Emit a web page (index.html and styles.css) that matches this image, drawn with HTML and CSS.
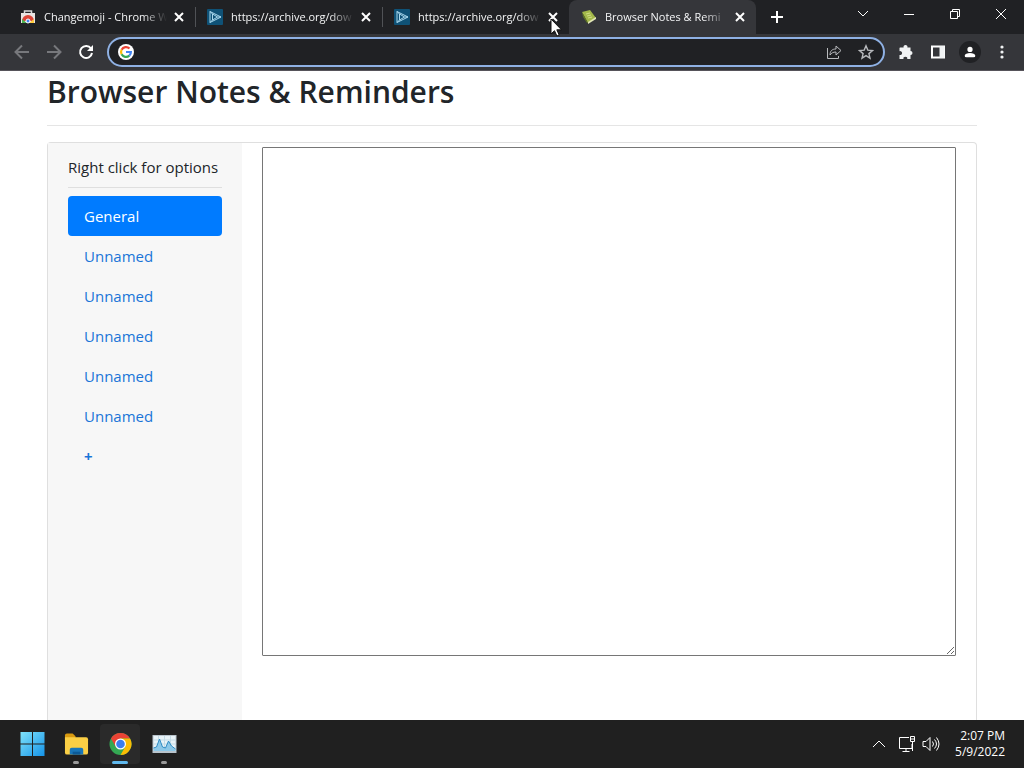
FILE: index.html
```html
<!DOCTYPE html>
<html lang="en">
<head>
    <meta charset="UTF-8">
    <meta name="viewport" content="width=device-width, initial-scale=1.0">
    <title>Browser Notes &amp; Reminders</title>
    <link rel="stylesheet" href="styles.css">
</head>
<body>
    <header class="browser">
        <div class="tab-strip">
            <div class="tab">
                <svg class="favicon" viewBox="0 0 16 16">
                    <path d="M4.500 4V2h7v2" fill="none" stroke="#d8d8d8" stroke-width="1.500"/>
                    <path d="M1 4h14v10H1z" fill="#e9e4e2"/>
                    <path d="M2 12a6 6 0 0 1 12 0z" fill="#db4437"/>
                    <path d="M2 14v-4l5 4z" fill="#4caf50"/>
                    <path d="M14 14v-4l-5 4z" fill="#ffcd40"/>
                    <circle cx="8" cy="12" r="2" fill="#4285f4" stroke="#fff"/>
                </svg>
                <span class="tab-title">Changemoji - Chrome W</span>
                <button class="tab-close" aria-label="Close tab"><svg viewBox="0 0 12 12"><path d="M2 2l8 8M10 2l-8 8"/></svg></button>
            </div>
            <div class="tab">
                <svg class="favicon" viewBox="0 0 16 16">
                    <rect width="16" height="16" rx="1" fill="#0f5277"/>
                    <path d="M3 2.500v11L14 8zM5.500 5v6l5-3zM3 2.500L5.500 5M3 13.500L5.500 11M14 8h-3.500" fill="none" stroke="#a9d8ee"/>
                </svg>
                <span class="tab-title">https://archive.org/dow</span>
                <button class="tab-close" aria-label="Close tab"><svg viewBox="0 0 12 12"><path d="M2 2l8 8M10 2l-8 8"/></svg></button>
            </div>
            <div class="tab last">
                <svg class="favicon" viewBox="0 0 16 16">
                    <rect width="16" height="16" rx="1" fill="#0f5277"/>
                    <path d="M3 2.500v11L14 8zM5.500 5v6l5-3zM3 2.500L5.500 5M3 13.500L5.500 11M14 8h-3.500" fill="none" stroke="#a9d8ee"/>
                </svg>
                <span class="tab-title">https://archive.org/dow</span>
                <button class="tab-close" aria-label="Close tab"><svg viewBox="0 0 12 12"><path d="M2 2l8 8M10 2l-8 8"/></svg></button>
                <svg class="cursor" viewBox="0 0 12 19"><path d="M1 1v15l3.500-3.300 2.400 5.300 2.300-1-2.400-5.200H11.500z" fill="#fff" stroke="#111"/></svg>
            </div>
            <div class="tab active">
                <svg class="favicon" viewBox="0 0 16 16">
                    <path d="M1 3l8-2 6 8-8 5z" fill="#a3b84a"/>
                    <path d="M1 3l1 5 4 6h1z" fill="#5e7325"/>
                    <path d="M7 13l8-5v2l-8 5z" fill="#e3e6b8"/>
                    <path d="M5 5l4-1M6 7l4-1M7 9l4-1" stroke="#d1dc85"/>
                </svg>
                <span class="tab-title">Browser Notes &amp; Remi</span>
                <button class="tab-close" aria-label="Close tab"><svg viewBox="0 0 12 12"><path d="M2 2l8 8M10 2l-8 8"/></svg></button>
            </div>
            <button class="new-tab" aria-label="New tab"><svg viewBox="0 0 14 14"><path d="M7 1v12M1 7h12"/></svg></button>
            <div class="window-controls">
                <button aria-label="Search tabs"><svg viewBox="0 0 12 12"><path d="M1 3l5 5 5-5"/></svg></button>
                <button aria-label="Minimize"><svg viewBox="0 0 12 12"><path d="M1 6.500h10"/></svg></button>
                <button aria-label="Restore"><svg viewBox="0 0 12 12"><path d="M1.500 3.500h7v7h-7zM3.500 3.500v-2h7v7h-2"/></svg></button>
                <button aria-label="Close"><svg viewBox="0 0 12 12"><path d="M1 1l10 10M11 1L1 11"/></svg></button>
            </div>
        </div>
        <div class="toolbar">
            <button class="tool dim" aria-label="Back"><svg viewBox="0 0 16 16"><path d="M15 8H2M8 1.500L1.500 8 8 14.500"/></svg></button>
            <button class="tool dim" aria-label="Forward"><svg viewBox="0 0 16 16"><path d="M1 8h13M8 1.500L14.500 8 8 14.500"/></svg></button>
            <button class="tool" aria-label="Reload"><svg viewBox="0 0 16 16"><path d="M13 4.500A6 6 0 1 0 14 9" stroke-width="2"/><path d="M15 1v6H9z" fill="#fff" stroke="none"/></svg></button>
            <div class="omnibox">
                <svg class="google" viewBox="0 0 16 16">
                    <circle cx="8" cy="8" r="8" fill="#fff"/>
                    <g fill="none" stroke-width="2.200">
                        <path d="M11.500 4.500A5 5 0 0 0 3.600 5.700" stroke="#ea4335"/>
                        <path d="M3.600 5.700a5 5 0 0 0 0 4.600" stroke="#fbbc05"/>
                        <path d="M3.600 10.300a5 5 0 0 0 7.700 1.400" stroke="#34a853"/>
                        <path d="M11.300 11.700A5 5 0 0 0 12.900 8H8" stroke="#4285f4"/>
                    </g>
                </svg>
                <input type="text" aria-label="Address and search bar">
                <button class="tool soft" aria-label="Share"><svg viewBox="0 0 16 16"><path d="M1.500 4v10.500h11V12M4 11c0-4 2-6 6-6V2l5 4.500-5 4.500V8c-3 0-4.500 1-6 3z"/></svg></button>
                <button class="tool soft" aria-label="Bookmark"><svg viewBox="0 0 16 16"><path d="M8 1.800l1.800 4.300 4.700.4-3.600 3.100 1.100 4.600L8 11.700l-4 2.500 1.100-4.600-3.600-3.100 4.700-.4z" stroke-width="1.400"/></svg></button>
            </div>
            <button class="tool" aria-label="Extensions"><svg viewBox="0 0 16 16"><path d="M2 3.500h3.600a2 2 0 1 1 3.800 0h3.100V7a2 2 0 1 1 0 4v4H9.200a1.900 1.900 0 1 0-3.700 0H1.500v-4a2 2 0 1 0 0-3.800V4z" fill="#f1f3f4" stroke="none"/></svg></button>
            <button class="tool" aria-label="Side panel"><svg viewBox="0 0 16 16"><path d="M2 2.500h12v11H2z" stroke-width="2"/><path d="M9.500 2h5v12h-5z" fill="#f1f3f4" stroke="none"/></svg></button>
            <button class="tool avatar" aria-label="Profile"><svg viewBox="0 0 16 16"><path d="M8 2a3 3 0 1 1 0 6 3 3 0 0 1 0-6zM2 14v-2c0-4 12-4 12 0v2z" fill="#fff" stroke="none"/></svg></button>
            <button class="tool" aria-label="Menu"><svg viewBox="0 0 16 16"><g fill="#f1f3f4" stroke="none"><circle cx="8" cy="3" r="1.600"/><circle cx="8" cy="8" r="1.600"/><circle cx="8" cy="13" r="1.600"/></g></svg></button>
        </div>
    </header>

    <main class="page">
        <h1>Browser Notes &amp; Reminders</h1>
        <hr class="divider">
        <div class="card">
            <nav class="sidebar">
                <p class="hint">Right click for options</p>
                <a class="note active" href="#">General</a>
                <a class="note" href="#">Unnamed</a>
                <a class="note" href="#">Unnamed</a>
                <a class="note" href="#">Unnamed</a>
                <a class="note" href="#">Unnamed</a>
                <a class="note" href="#">Unnamed</a>
                <a class="note add" href="#">+</a>
            </nav>
            <div class="editor">
                <textarea aria-label="Note text"></textarea>
            </div>
        </div>
    </main>

    <footer class="taskbar">
        <button class="app" aria-label="Start">
            <svg viewBox="0 0 24 24">
                <defs><linearGradient id="win" x2="1" y2="1"><stop stop-color="#7fe3fb"/><stop offset="1" stop-color="#1593e8"/></linearGradient></defs>
                <path d="M0 0h11.500v11.500H0zM12.500 0H24v11.500H12.500zM0 12.500h11.500V24H0zM12.500 12.500H24V24H12.500z" fill="url(#win)"/>
            </svg>
        </button>
        <button class="app open" aria-label="File Explorer">
            <svg viewBox="0 0 26 24">
                <path d="M1 3q0-2 2-2h6l3 3v4H1z" fill="#d99a10"/>
                <path d="M1 5h22q2 0 2 2v14q0 2-2 2H3q-2 0-2-2z" fill="#fbcf45"/>
                <path d="M6 23v-5q0-2 2-2h10q2 0 2 2v5z" fill="#1976b9"/>
                <path d="M9 20h8v3H9z" fill="#0c5a97"/>
            </svg>
        </button>
        <button class="app open current" aria-label="Google Chrome">
            <svg viewBox="0 0 24 24">
                <circle cx="12" cy="12" r="11" fill="#34a853"/>
                <path d="M2.470 6.500A11 11 0 0 1 21.530 6.500H12L7.240 14.750z" fill="#ea4335"/>
                <path d="M21.530 6.500A11 11 0 0 1 12 23L16.760 14.750 12 6.500z" fill="#fbbc04"/>
                <circle cx="12" cy="12" r="5.500" fill="#fff"/>
                <circle cx="12" cy="12" r="4.300" fill="#3b7ded"/>
            </svg>
        </button>
        <button class="app open" aria-label="Resource Monitor">
            <svg viewBox="0 0 24 24">
                <path d="M0 3h24v18H0z" fill="#b9c4cc"/>
                <path d="M1 4h22v15H1z" fill="#e8f3f8"/>
                <path d="M1 8h22M1 12h22M6 4v15M12 4v15M18 4v15" stroke="#c4dbe5"/>
                <path d="M1 19v-3l3-1 3-8 3 8 3 1 3-7 3 5 4 3v2z" fill="#8cc8e8"/>
                <path d="M1 16l3-1 3-8 3 8 3 1 3-7 3 5 4 3" fill="none" stroke="#2f8cc4"/>
            </svg>
        </button>
        <div class="tray">
            <svg class="overflow" viewBox="0 0 16 16"><path d="M2 11l6-6 6 6"/></svg>
            <svg class="wide" viewBox="0 0 18 18"><path d="M11 2.500H1.500v11H14V9M4.500 16.500h7M8 13.500v3M12.500 1.500h4v5h-4zM14.500 6.500V16M12.500 4h4"/></svg>
            <svg class="wide" viewBox="0 0 18 18"><path d="M1 6.500h3l4-4v13l-4-4H1zM10.500 6.500q2 2.500 0 5M12.500 4.500q4 4.500 0 9M14.500 2.500q5 6.500 0 13"/></svg>
            <div class="clock"><span>2:07 PM</span><span>5/9/2022</span></div>
        </div>
    </footer>
</body>
</html>
```
FILE: styles.css
```css
* {
    box-sizing: border-box;
}
body {
    display: flex;
    flex-direction: column;
    height: 100vh;
    margin: 0;
    overflow: hidden;
    font-family: "Open Sans", "Noto Sans", sans-serif;
    font-size: 15px;
    line-height: 24px;
    color: #212529;
    background: #fff;
}
button {
    display: flex;
    align-items: center;
    justify-content: center;
    padding: 0;
    border: none;
    background: none;
}
button svg {
    fill: none;
    stroke: #fff;
}

/* Browser tabs */
.tab-strip {
    display: flex;
    height: 34px;
    padding-left: 8px;
    background: #202124;
}
.tab {
    position: relative;
    display: flex;
    align-items: center;
    flex: 0 1 187px;
    min-width: 0;
    padding: 0 8px 0 12px;
    font-size: 11px;
    color: #f4f5f6;
}
.tab:not(.last):not(.active)::after {
    content: "";
    position: absolute;
    right: -1px;
    width: 1px;
    height: 20px;
    background: #505256;
}
.tab.active {
    background: #35363a;
    border-radius: 8px 8px 0 0;
}
.favicon {
    flex: none;
    width: 16px;
    height: 16px;
}
.tab-title {
    flex: 1;
    margin: 0 4px 0 8px;
    overflow: hidden;
    white-space: nowrap;
    mask-image: linear-gradient(to right, #000 80%, transparent);
}
.tab-close {
    width: 16px;
    height: 16px;
}
.tab-close svg {
    width: 12px;
    height: 12px;
    stroke-width: 2;
}
.cursor {
    position: absolute;
    right: 7px;
    top: 18px;
    width: 12px;
    height: 19px;
    z-index: 1;
}
.new-tab {
    width: 42px;
}
.new-tab svg {
    width: 14px;
    height: 14px;
    stroke-width: 2;
}
.window-controls {
    display: flex;
    margin-left: auto;
}
.window-controls button {
    width: 46px;
    height: 28px;
}
.window-controls svg {
    width: 12px;
    height: 12px;
}

/* Address bar */
.toolbar {
    display: flex;
    align-items: center;
    height: 37px;
    padding: 0 6px;
    background: #35363a;
    border-bottom: 1px solid #56535a;
}
.tool {
    flex: none;
    width: 32px;
    height: 28px;
}
.tool svg {
    width: 16px;
    height: 16px;
    stroke-width: 2;
}
.tool.dim svg {
    stroke: #77787c;
}
.tool.soft svg {
    stroke: #b8babd;
    stroke-width: 1;
}
.tool.avatar svg {
    width: 22px;
    height: 22px;
    padding: 4px;
    border-radius: 50%;
    background: #202124;
}
.omnibox {
    display: flex;
    align-items: center;
    flex: 1;
    height: 30px;
    margin: 0 5px;
    padding: 0 1px 0 9px;
    border: 2px solid #8fb1e4;
    border-radius: 15px;
    background: #202124;
}
.omnibox input {
    flex: 1;
    min-width: 0;
    border: none;
    outline: none;
    color: #fff;
    background: none;
}
.google {
    width: 16px;
    height: 16px;
}

/* Notes page */
.page {
    flex: 1;
    display: flex;
    flex-direction: column;
    min-height: 0;
    padding: 0 47px;
    overflow: hidden;
}
h1 {
    margin: 0;
    font-size: 30px;
    font-weight: 600;
    line-height: 42px;
}
.divider {
    width: 100%;
    margin: 12px 0 16px;
    border: none;
    border-top: 1px solid #e5e5e5;
}
.card {
    flex: 1;
    display: flex;
    min-height: 0;
    border: 1px solid #dfdfdf;
    border-bottom: none;
    border-radius: 4px 4px 0 0;
}
.sidebar {
    flex: 0 0 194px;
    padding: 12px 20px;
    background: #f7f7f7;
}
.hint {
    margin: 0 0 8px;
    padding-bottom: 8px;
    white-space: nowrap;
    border-bottom: 1px solid #dfdfdf;
}
.note {
    display: block;
    padding: 8px 16px;
    border-radius: 4px;
    color: #1a75d8;
    text-decoration: none;
}
.note.active {
    color: #fff;
    background: #007bff;
}
.note.add {
    font-weight: 700;
}
.editor {
    flex: 1;
    padding: 4px 20px;
}
textarea {
    display: block;
    width: 100%;
    height: calc(100vh - 259px);
    border: 1px solid #767676;
    border-radius: 1px;
    resize: both;
}

/* Taskbar */
.taskbar {
    display: flex;
    align-items: center;
    gap: 4px;
    height: 48px;
    padding: 0 19px 0 12px;
    color: #fff;
    background: #202020;
}
.app {
    position: relative;
    width: 40px;
    height: 40px;
    border-radius: 4px;
}
.app svg {
    width: 25px;
    height: 24px;
    stroke: none;
}
.app.current {
    background: #2a2a2a;
}
.app.open::after {
    content: "";
    position: absolute;
    bottom: 0;
    width: 6px;
    height: 3px;
    border-radius: 2px;
    background: #9a9a9a;
}
.app.current::after {
    width: 16px;
    background: #60b9ee;
}
.tray {
    display: flex;
    align-items: center;
    gap: 6px;
    margin-left: auto;
}
.tray svg {
    width: 16px;
    height: 16px;
    fill: none;
    stroke: #fff;
}
.tray .overflow {
    margin-right: 5px;
}
.tray .wide {
    width: 18px;
    height: 18px;
}
.clock {
    display: flex;
    flex-direction: column;
    margin-left: 9px;
    font-size: 12px;
    line-height: 16px;
    text-align: right;
}
```
